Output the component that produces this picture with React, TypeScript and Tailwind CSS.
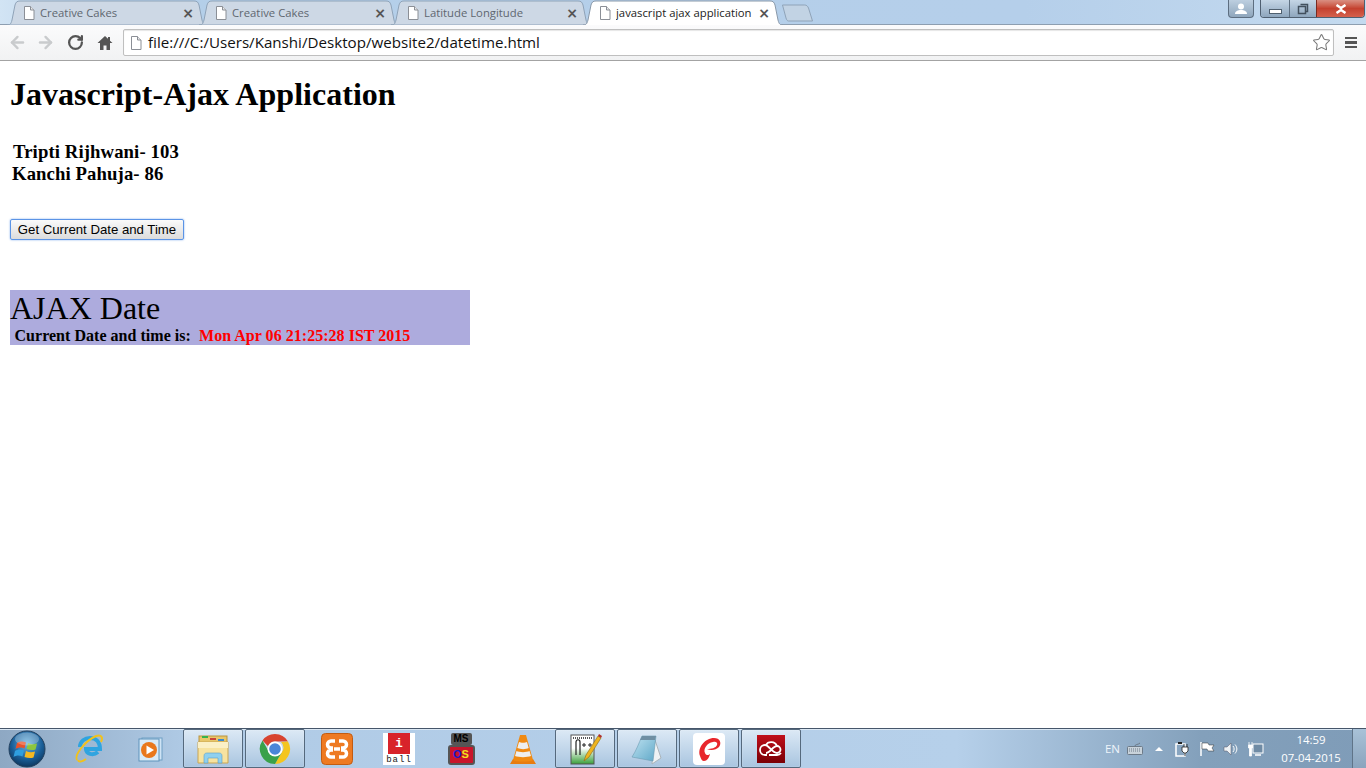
import { ArrowLeft, ArrowRight, RotateCw, Star } from 'lucide-react'

const tabs = [
  { title: 'Creative Cakes', active: false },
  { title: 'Creative Cakes', active: false },
  { title: 'Latitude Longitude', active: false },
  { title: 'javascript ajax application', active: true },
]

function PageIcon({ className = '' }: { className?: string }) {
  return (
    <svg viewBox="0 0 14 16" className={`h-4 w-[14px] shrink-0 ${className}`}>
      <path d="M2.5 1.5h6l3.5 3.5v9.500h-9.500z" fill="#fff" stroke="#8b8f96" />
      <path d="M8.500 1.500v3.500h3.500" fill="#e8e8e8" stroke="#8b8f96" />
    </svg>
  )
}

function Tab({ title, active }: { title: string; active: boolean }) {
  return (
    <div className={`relative flex h-[25px] w-[200px] shrink-0 items-center pl-[15px] pr-[13px] pt-[1px] ${active ? 'z-10' : ''}`}>
      <svg viewBox="0 0 200 25" preserveAspectRatio="none" className="absolute inset-0 h-full w-full">
        <path
          d={
            active
              ? 'M0 25c3 0 4-1 5-5L8 5c1-3 2-4 5-4h174c3 0 4 1 5 4l3 15c1 4 2 5 5 5'
              : 'M0 25c3 0 4-1 5-5L8 5c1-3 2-4 5-4h174c3 0 4 1 5 4l3 15c1 4 2 5 5 5z'
          }
          fill={active ? '#ffffff' : '#cdd8e5'}
          stroke={active ? '#8a99aa' : '#8fa3b8'}
        />
      </svg>
      <PageIcon className="relative" />
      <span
        className={`relative ml-[4px] flex-1 truncate text-[11.300px] ${active ? 'text-[#222]' : 'text-[#5f6770]'}`}
        style={{ fontFamily: '"Open Sans", sans-serif' }}
      >
        {title}
      </span>
      <span className="relative text-[14px] font-bold leading-none text-[#555]" style={{ fontFamily: '"DejaVu Sans", sans-serif' }}>
        ×
      </span>
    </div>
  )
}

function WindowControls() {
  return (
    <div className="flex items-start">
      <div className="mr-[6px] flex h-[18px] w-[26px] items-center justify-center rounded-b-[4px] border border-t-0 border-[#5d6e80] bg-gradient-to-b from-[#bdcfe0] to-[#8fa6bc]">
        <svg viewBox="0 0 14 12" className="h-3 w-[14px]">
          <circle cx="7" cy="3.500" r="3" fill="#fff" />
          <path d="M1 11c0-3 3-4 6-4s6 1 6 4z" fill="#fff" />
        </svg>
      </div>
      <div className="mr-[1px] flex h-[18px] w-[105px] overflow-hidden rounded-b-[4px] border border-t-0 border-[#4f5f70]">
        <div className="flex w-[28px] items-end justify-center bg-gradient-to-b from-[#c5d6e6] to-[#8ea6bd] pb-[3px]">
          <div className="h-[5px] w-[13px] border border-[#50606f] bg-white" />
        </div>
        <div className="flex w-[27px] items-center justify-center border-l border-[#5f7183] bg-gradient-to-b from-[#c5d6e6] to-[#8ea6bd]">
          <svg viewBox="0 0 12 12" className="h-3 w-3">
            <path d="M3.500 1.500h7v7h-2M1.500 3.500h7v7h-7z" fill="none" stroke="#42505e" strokeWidth="1.500" />
          </svg>
        </div>
        <div className="flex flex-1 items-center justify-center border-l border-[#7a2a20] bg-gradient-to-b from-[#d98f82] via-[#c4412f] to-[#d5604c]">
          <svg viewBox="0 0 14 10" className="h-[10px] w-[14px]">
            <path d="M2.500 1l4.500 3 4.500-3M2.500 9l4.500-3 4.500 3" fill="none" stroke="#fff" strokeWidth="2.500" />
          </svg>
        </div>
      </div>
    </div>
  )
}

function Toolbar() {
  return (
    <div className="flex h-[36px] items-center border-b border-[#a3a3a3] bg-gradient-to-b from-[#fbfbfc] to-[#f1f2f3] pl-[8px] pr-[9px]">
      <ArrowLeft size={19} strokeWidth={3} className="text-[#c9cbcd]" />
      <ArrowRight size={19} strokeWidth={3} className="ml-[9px] text-[#c9cbcd]" />
      <RotateCw size={17} strokeWidth={3.200} className="ml-[12px] text-[#555]" />
      <svg viewBox="0 0 16 16" className="ml-[13px] h-4 w-4">
        <path d="M8 1L0.500 8h2.500v7h3.500v-4.500h3V15H13V8h2.500L13 5.700V2h-2v1.800z" fill="#555" />
      </svg>
      <div className="ml-[10px] flex h-[27px] min-w-0 flex-1 items-center rounded-[2px] border border-[#bfbfbf] bg-white pl-[5px] pr-[2px] shadow-[inset_0_1px_1px_#e6e6e6]">
        <PageIcon />
        <span className="ml-[5px] flex-1 text-[15.150px] text-[#111]" style={{ fontFamily: '"Open Sans", sans-serif' }}>
          file:///C:/Users/Kanshi/Desktop/website2/datetime.html
        </span>
        <Star size={19} strokeWidth={1.300} className="text-[#777]" />
      </div>
      <div className="ml-[11px] flex w-[12px] flex-col gap-[2px]">
        <div className="h-[2.500px] bg-[#555]" />
        <div className="h-[2.500px] bg-[#555]" />
        <div className="h-[2.500px] bg-[#555]" />
      </div>
    </div>
  )
}

function Page() {
  const serif = { fontFamily: '"Liberation Serif", serif' }
  return (
    <main className="min-h-0 flex-1 overflow-hidden bg-white pl-[10px] text-black" style={serif}>
      <h1 className="mt-[15px] text-[32px] font-bold leading-[36px] tracking-[0.03px]">Javascript-Ajax Application</h1>
      <div className="mt-[29px] text-[18.720px] font-bold leading-[22px] tracking-[0.1px]">
        <div className="pl-[3px]">Tripti Rijhwani- 103</div>
        <div className="pl-[2px]">Kanchi Pahuja- 86</div>
      </div>
      <button
        className="mt-[34px] block h-[21px] w-[174px] rounded-[2px] border border-[#5b94e6] bg-gradient-to-b from-[#fafafa] to-[#dcdcdc] text-[13.200px] leading-none text-black shadow-[0_0_2px_#7aa7ec]"
        style={{ fontFamily: '"Liberation Sans", sans-serif' }}
      >
        Get Current Date and Time
      </button>
      <section className="mt-[50px] h-[55px] w-[460px] bg-[#adabdd]">
        <div className="text-[32px] leading-[37px]">AJAX Date</div>
        <div className="whitespace-pre pl-[4.500px] text-[16px] font-bold leading-[18px] tracking-[0.03px]">
          Current Date and time is:{'  '}
          <span className="text-[#ff0000]">Mon Apr 06 21:25:28 IST 2015</span>
        </div>
      </section>
    </main>
  )
}

function WinOrb() {
  return (
    <svg viewBox="0 0 38 38" className="h-[38px] w-[38px]">
      <defs>
        <radialGradient id="orb" cx="50%" cy="35%" r="70%">
          <stop offset="0" stopColor="#6cb4e0" />
          <stop offset="0.6" stopColor="#1a5f99" />
          <stop offset="1" stopColor="#0c2f52" />
        </radialGradient>
      </defs>
      <circle cx="19" cy="19" r="18" fill="url(#orb)" stroke="#23405e" />
      <path d="M9 13c3-2 6-2 9-.500l-1.500 6c-3-1.500-6-1.500-9 .500z" fill="#e8522a" />
      <path d="M20 13c3 1.500 6 1.500 9 .500l-1.500 6c-3 1-6 .500-9-.500z" fill="#8cc63f" />
      <path d="M7 21c3-2 6-2 9-.500l-1.500 6c-3-1.500-6-1.500-9 .500z" fill="#2f9fe0" />
      <path d="M18 21c3 1.500 6 1.500 9 .500l-1.500 6c-3 1-6 .500-9-.500z" fill="#f5b922" />
      <ellipse cx="19" cy="9" rx="12" ry="6.500" fill="#fff" opacity="0.250" />
    </svg>
  )
}

function IEIcon() {
  return (
    <svg viewBox="0 0 32 32" className="h-8 w-8">
      <path d="M7 14C7 8 12 5 17 5c6 0 10 4 10 11H13c0 5 7 7 12 3" fill="none" stroke="#2fa4e0" strokeWidth="4" />
      <path d="M4 27C1 22 12 8 23 3c6-2 7 2 5 6" fill="none" stroke="#f1c21c" strokeWidth="2" />
      <path d="M5 27c1 3 5 1 8-1" fill="none" stroke="#f1c21c" strokeWidth="2" />
    </svg>
  )
}

function WmpIcon() {
  return (
    <svg viewBox="0 0 28 28" className="mr-[5px] h-7 w-7">
      <rect x="7" y="3" width="20" height="22" fill="#cfe4f5" stroke="#6f9fc4" />
      <rect x="4" y="4" width="20" height="22" fill="#d9ebf8" stroke="#5f93bb" />
      <circle cx="14" cy="15" r="8" fill="#e9781c" />
      <path d="M11.500 10.500l7.500 4.500-7.500 4.500z" fill="#fff" />
    </svg>
  )
}

function ExplorerIcon() {
  return (
    <svg viewBox="0 0 34 32" className="h-8 w-[34px]">
      <rect x="3" y="3" width="28" height="8" fill="#e8c76a" stroke="#b99440" />
      <rect x="6" y="3" width="6" height="2" fill="#35b34a" />
      <rect x="14" y="5" width="6" height="2" fill="#c8443a" />
      <rect x="22" y="6" width="6" height="2" fill="#3a8ad0" />
      <path d="M2 9h30v21H2z" fill="#f7e3a0" stroke="#c9a552" />
      <path d="M2 9h30v6H2z" fill="#fbf0c6" />
      <path d="M8 30v-7c0-2 1-3 3-3h12c2 0 3 1 3 3v7h-4v-5H12v5z" fill="#8fd0ef" stroke="#5aa0c8" strokeWidth="0.600" />
    </svg>
  )
}

function ChromeIcon() {
  return (
    <svg viewBox="0 0 32 32" className="h-8 w-8">
      <path d="M16 1a15 15 0 0 1 13 7.500H16a7.500 7.500 0 0 0-7 4.800L3.500 7.500A15 15 0 0 1 16 1z" fill="#d8432f" />
      <path d="M29 8.500A15 15 0 0 1 16 31l6.500-11.300A7.500 7.500 0 0 0 22 9z" fill="#f4c51f" />
      <path d="M16 31A15 15 0 0 1 3.500 7.500L10 19a7.500 7.500 0 0 0 12.500 .700z" fill="#3aa14a" />
      <circle cx="16" cy="16" r="7.500" fill="#fff" />
      <circle cx="16" cy="16" r="5.800" fill="#4a86d8" />
    </svg>
  )
}

function XamppIcon() {
  return (
    <svg viewBox="0 0 32 32" className="h-8 w-8">
      <rect x="0.500" y="0.500" width="31" height="31" rx="4" fill="#ee7a22" stroke="#c25c12" />
      <path d="M14 8h-4a3.500 3.500 0 0 0 0 7h2M14 24h-4a3.500 3.500 0 0 1 0-7h2M18 8h4a3.500 3.500 0 0 1 0 7h-2M18 24h4a3.500 3.500 0 0 0 0-7h-2M13 16h6" fill="none" stroke="#fff" strokeWidth="3.500" />
    </svg>
  )
}

function IballIcon() {
  return (
    <div className="flex h-[32px] w-[32px] flex-col items-center bg-white" style={{ fontFamily: '"Liberation Mono", monospace' }}>
      <div className="flex h-[21px] w-[22px] items-center justify-center bg-[#d8232a] text-[13px] font-bold leading-none text-white">i</div>
      <div className="mt-[1px] text-[9px] leading-[10px] tracking-[1px] text-[#222]">ball</div>
    </div>
  )
}

function MsIcon() {
  return (
    <div className="flex h-[32px] w-[28px] flex-col items-center" style={{ fontFamily: '"Liberation Sans", sans-serif' }}>
      <div className="h-[12px] w-[21px] rounded-[2px] bg-[#555] text-center text-[10px] font-bold leading-[12px] text-black">MS</div>
      <div className="relative flex h-[20px] w-[27px] items-center justify-center rounded-[3px] border-2 border-[#555] bg-[#c9152b] text-[11px] font-bold leading-none text-[#1a1acb]">
        <span>O</span>
        <span className="text-[#f2e21b]">S</span>
      </div>
    </div>
  )
}

function VlcIcon() {
  return (
    <svg viewBox="0 0 28 32" className="h-8 w-7">
      <path d="M1 31l3-5h20l3 5z" fill="#e87c10" />
      <path d="M11 2h6l7 25c-3 2-17 2-20 0z" fill="#f08a12" />
      <path d="M10 9c2 1 6 1 8 0l1.700 6c-3 1.500-8 1.500-11.400 0zM7.500 18c3 1.500 10 1.500 13 0l1.500 5c-4 1.500-12 1.500-16 0z" fill="#eee" />
    </svg>
  )
}

function NotepadPlusIcon() {
  return (
    <svg viewBox="0 0 34 34" className="h-[34px] w-[34px]">
      <defs>
        <linearGradient id="npp" x1="0" y1="0" x2="0" y2="1">
          <stop offset="0.450" stopColor="#ffffff" />
          <stop offset="1" stopColor="#3aa03a" />
        </linearGradient>
      </defs>
      <rect x="3" y="3" width="23" height="29" fill="url(#npp)" stroke="#555" />
      <path d="M5 6h19" stroke="#555" strokeDasharray="1 1" strokeWidth="2" />
      <path d="M8 23V10c0-3 4-3 4 0v13" fill="none" stroke="#222" strokeWidth="1.200" />
      <path d="M14 13h4M16 11v4M20 13h4M22 11v4" stroke="#222" />
      <path d="M16 29l2-6L30 4l3 2-12 19z" fill="#eeb41f" stroke="#8a6a15" strokeWidth="0.600" />
      <path d="M30 4l1-2 3 2-1 2z" fill="#b0302a" />
    </svg>
  )
}

function NotepadIcon() {
  return (
    <svg viewBox="0 0 34 32" className="h-8 w-[34px]">
      <defs>
        <linearGradient id="pad" x1="0" y1="0" x2="1" y2="1">
          <stop offset="0" stopColor="#c2e4f2" />
          <stop offset="1" stopColor="#5fa8c8" />
        </linearGradient>
      </defs>
      <path d="M24 4l7 21-9 6z" fill="#eef2f4" stroke="#aab4ba" />
      <path d="M12 3h14l-3 25L2 24C6 18 9 10 12 3z" fill="url(#pad)" stroke="#6a9ab2" strokeWidth="0.600" />
      <path d="M12 3h14l-1 4H10z" fill="#6f8fa3" />
    </svg>
  )
}

function AirtelIcon() {
  return (
    <div className="flex h-8 w-8 items-center justify-center rounded-[4px] bg-white">
      <svg viewBox="0 0 26 26" className="h-[26px] w-[26px]">
        <path d="M4 20C1 12 9 2 18 2c6 0 8 5 5 9-3 3-8 4-12 2 4 0 9-1 10-4 1-2-1-4-4-3C11 7 7 13 9 17c1 3 4 2 5 1-1 4-3 7-6 7-2 0-3-2-4-5z" fill="#e8262c" />
      </svg>
    </div>
  )
}

function CloudIcon() {
  return (
    <div className="flex h-7 w-7 items-center justify-center bg-gradient-to-b from-[#c0101a] to-[#7a0006]">
      <svg viewBox="0 0 24 16" className="h-[18px] w-6">
        <path d="M8 14H6a5 5 0 0 1 0-10c4 0 7 8 12 8a3.500 3.500 0 0 0 0-7c-4 0-7 7-11 7" fill="none" stroke="#fff" strokeWidth="1.800" />
        <path d="M7 4c2-4 9-4 11 1M10 14h8a5 5 0 0 0 4-2" fill="none" stroke="#fff" strokeWidth="1.800" />
      </svg>
    </div>
  )
}

function TaskButton({ children, running }: { children: React.ReactNode; running?: boolean }) {
  return (
    <div
      className={
        running
          ? 'mx-[1px] flex h-[39px] w-[60px] items-center justify-center rounded-[2px] border border-[#55697d] bg-gradient-to-b from-[#dce9f5] to-[#a9c5e0] shadow-[inset_0_0_1px_#fff]'
          : 'mx-[1px] flex h-[39px] w-[60px] items-center justify-center'
      }
    >
      {children}
    </div>
  )
}

function Tray() {
  return (
    <div className="flex items-center text-white" style={{ fontFamily: '"Open Sans", sans-serif' }}>
      <span className="text-[11.500px] text-[#eef4fa]">EN</span>
      <svg viewBox="0 0 16 14" className="ml-[7px] h-[14px] w-4">
        <rect x="0.500" y="4.500" width="15" height="8" rx="1" fill="#c8d2da" stroke="#6c7a88" />
        <path d="M2 7h12M2 9h12" stroke="#6c7a88" strokeDasharray="1 1" />
        <path d="M8 4c0-2 3-1 5-3" fill="none" stroke="#6c7a88" />
      </svg>
      <div className="ml-[12px] h-0 w-0 border-x-[4px] border-b-[4px] border-x-transparent border-b-white" />
      <svg viewBox="0 0 16 16" className="ml-[12px] h-4 w-4">
        <rect x="1" y="3" width="9" height="12" fill="none" stroke="#fff" strokeWidth="1.500" />
        <path d="M3 1h4v2H3z" fill="#222" />
        <path d="M7 6h6v4l-2 2H9L7 10zM9 3v3M12 3v3M10 12v3" fill="#fff" stroke="#222" strokeWidth="0.800" />
      </svg>
      <svg viewBox="0 0 16 16" className="ml-[8px] h-4 w-4">
        <path d="M2 1v14" stroke="#fff" strokeWidth="1.500" />
        <path d="M3 2h6l1 2h5l-2 3 2 3H9L8 8H3z" fill="#fff" stroke="#333" strokeWidth="0.500" />
      </svg>
      <svg viewBox="0 0 16 16" className="ml-[8px] h-4 w-4">
        <path d="M1 6h3l4-4v12l-4-4H1z" fill="#eef2f5" stroke="#556" strokeWidth="0.500" />
        <path d="M10 5c1.500 2 1.500 4 0 6M12 3.500c2.500 3 2.500 6 0 9" fill="none" stroke="#fff" />
      </svg>
      <svg viewBox="0 0 16 16" className="ml-[9px] h-4 w-4">
        <rect x="5" y="3" width="10" height="9" fill="#6f8ba5" stroke="#fff" />
        <path d="M7 14h6" stroke="#fff" strokeWidth="1.500" />
        <path d="M1 1v3M4 1v3M0.500 4h4v3h-1v8h-2V7h-1z" fill="#fff" stroke="#fff" strokeWidth="0.800" />
      </svg>
      <div className="ml-[10px] w-[74px] text-center text-[11.400px] leading-[18px] text-white">
        <div>14:59</div>
        <div>07-04-2015</div>
      </div>
    </div>
  )
}

function Taskbar() {
  return (
    <footer className="flex h-[40px] items-stretch border-t border-[#46566a] bg-[linear-gradient(90deg,#8ea8c3_0,#b0cbe6_14%,#b6d0ea_70%,#83a0bb_88%,#7f9cb8_100%)] shadow-[inset_0_1px_0_#dbe8f4]">
      <div className="flex w-[58px] items-center pl-[8px]">
        <WinOrb />
      </div>
      <div className="flex items-center">
        <TaskButton><IEIcon /></TaskButton>
        <TaskButton><WmpIcon /></TaskButton>
        <TaskButton running><ExplorerIcon /></TaskButton>
        <TaskButton running><ChromeIcon /></TaskButton>
        <TaskButton><XamppIcon /></TaskButton>
        <TaskButton><IballIcon /></TaskButton>
        <TaskButton><MsIcon /></TaskButton>
        <TaskButton><VlcIcon /></TaskButton>
        <TaskButton running><NotepadPlusIcon /></TaskButton>
        <TaskButton running><NotepadIcon /></TaskButton>
        <TaskButton running><AirtelIcon /></TaskButton>
        <TaskButton running><CloudIcon /></TaskButton>
      </div>
      <div className="flex flex-1 items-center justify-end">
        <Tray />
        <div className="ml-[4px] h-full w-[14px] border-l border-[#5f7488] bg-gradient-to-b from-[#a9c2d8] to-[#8aa4bd]" />
      </div>
    </footer>
  )
}

export default function App() {
  return (
    <div className="flex h-screen flex-col overflow-hidden">
      <header className="flex h-[25px] items-start justify-between bg-[linear-gradient(90deg,#d2e4f4_0,#b4cfe9_8%,#b5cfea_75%,#c4daef_100%)] shadow-[inset_0_-1px_0_#8d9eb0]">
        <div className="flex items-start pl-[7px]">
          {tabs.map((tab, i) => (
            <div key={i} className={i === 0 ? '' : 'ml-[-8px]'}>
              <Tab title={tab.title} active={tab.active} />
            </div>
          ))}
          <svg viewBox="0 0 32 18" className="ml-[-1px] mt-[4px] h-[18px] w-[32px]">
            <path d="M0.500 1h22c2 0 3 1 4 3l4 13h-24c-1 0-2-1-2.500-3z" fill="#c2d3e4" stroke="#8fa3b8" />
          </svg>
        </div>
        <WindowControls />
      </header>
      <Toolbar />
      <Page />
      <Taskbar />
    </div>
  )
}
